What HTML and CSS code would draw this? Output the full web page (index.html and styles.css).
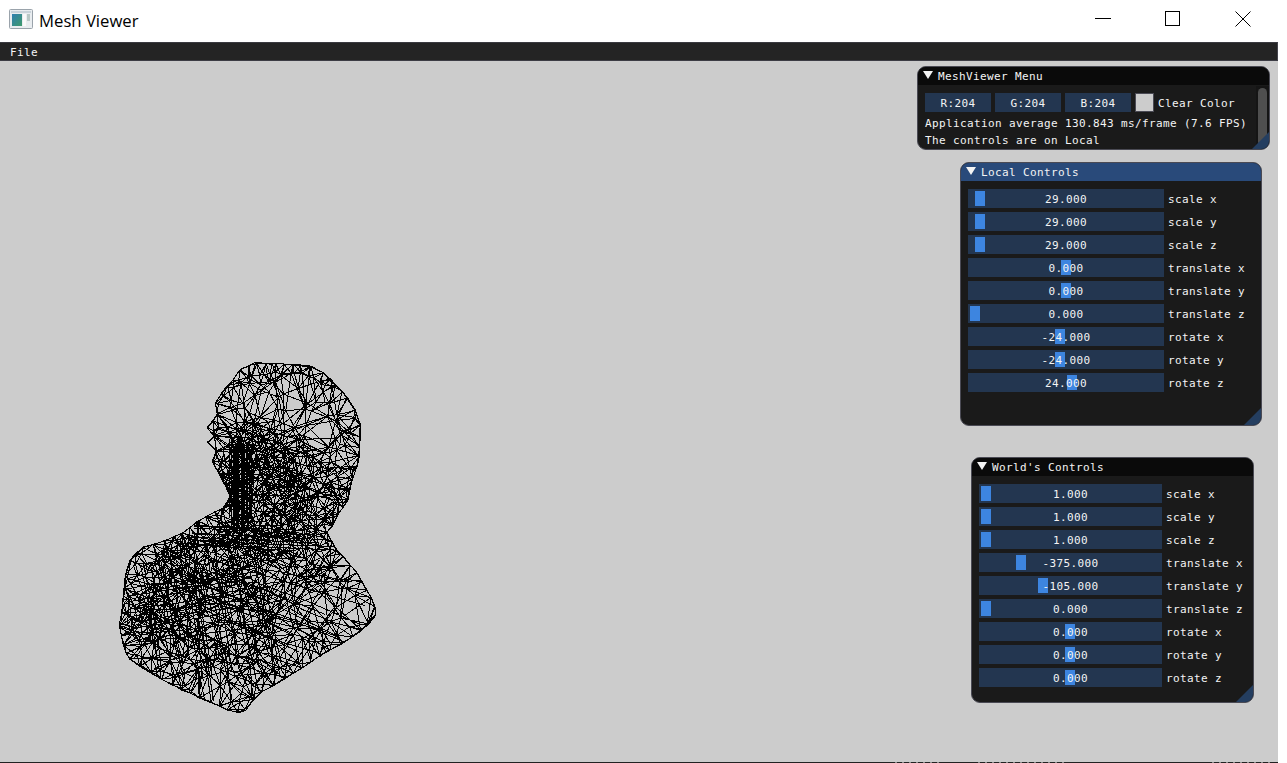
FILE: index.html
```html
<!DOCTYPE html>
<html lang="en">
<head>
<meta charset="utf-8">
<title>Mesh Viewer</title>
<link rel="stylesheet" href="styles.css">
</head>
<body>
<div class="app">
  <header class="titlebar">
    <svg class="app-icon" width="24" height="20" viewBox="0 0 24 20">
      <defs>
        <linearGradient id="pane" x1="0" y1="0" x2="1" y2="1">
          <stop offset="0" stop-color="#2f7fb0"/>
          <stop offset="1" stop-color="#3f9a6c"/>
        </linearGradient>
      </defs>
      <rect x="0.5" y="0.5" width="23" height="19" rx="1" fill="#e9edf0" stroke="#9aa3ab"/>
      <rect x="2" y="2" width="20" height="2" fill="#c9d3da"/>
      <rect x="3" y="5" width="10" height="12" fill="url(#pane)"/>
      <rect x="14" y="5" width="3" height="12" fill="#fafafa"/>
      <rect x="18" y="5" width="3" height="7" fill="#b9c8c6"/>
    </svg>
    <span class="app-title">Mesh Viewer</span>
    <div class="win-controls">
      <button class="win-btn" aria-label="Minimize"><svg width="16" height="16" viewBox="0 0 16 16"><path d="M0 7.5H16" class="glyph"/></svg></button>
      <button class="win-btn" aria-label="Maximize"><svg width="16" height="16" viewBox="0 0 16 16"><rect x="0.5" y="0.5" width="14" height="14" class="glyph"/></svg></button>
      <button class="win-btn" aria-label="Close"><svg width="16" height="16" viewBox="0 0 16 16"><path d="M0.5 0.5L15.5 15.5M15.5 0.5L0.5 15.5" class="glyph thin"/></svg></button>
    </div>
  </header>

  <nav class="menubar"><span class="menu-item">File</span></nav>

  <main class="viewport">
    <svg id="mesh" class="mesh" width="1278" height="701" viewBox="0 61 1278 701"></svg>

    <section class="win win-menu">
      <h2 class="win-title"><i class="arrow"></i>MeshViewer Menu</h2>
      <div class="win-body win-body-menu">
        <div class="color-row">
          <span class="chan">R:204</span>
          <span class="chan">G:204</span>
          <span class="chan">B:204</span>
          <span class="swatch"></span>
          <span class="row-label">Clear Color</span>
        </div>
        <p class="line">Application average 130.843 ms/frame (7.6 FPS)</p>
        <p class="line">The controls are on Local</p>
      </div>
      <div class="scrollbar"><div class="thumb"></div></div>
      <i class="grip"></i>
    </section>

    <section class="win win-local">
      <h2 class="win-title active"><i class="arrow"></i>Local Controls</h2>
      <div class="win-body">
        <div class="row"><div class="slider"><i class="grab" style="left:7px"></i><span class="val">29.000</span></div><span class="row-label">scale x</span></div>
        <div class="row"><div class="slider"><i class="grab" style="left:7px"></i><span class="val">29.000</span></div><span class="row-label">scale y</span></div>
        <div class="row"><div class="slider"><i class="grab" style="left:7px"></i><span class="val">29.000</span></div><span class="row-label">scale z</span></div>
        <div class="row"><div class="slider"><i class="grab" style="left:93px"></i><span class="val">0.000</span></div><span class="row-label">translate x</span></div>
        <div class="row"><div class="slider"><i class="grab" style="left:93px"></i><span class="val">0.000</span></div><span class="row-label">translate y</span></div>
        <div class="row"><div class="slider"><i class="grab" style="left:2px"></i><span class="val">0.000</span></div><span class="row-label">translate z</span></div>
        <div class="row"><div class="slider"><i class="grab" style="left:87px"></i><span class="val">-24.000</span></div><span class="row-label">rotate x</span></div>
        <div class="row"><div class="slider"><i class="grab" style="left:87px"></i><span class="val">-24.000</span></div><span class="row-label">rotate y</span></div>
        <div class="row"><div class="slider"><i class="grab" style="left:99px"></i><span class="val">24.000</span></div><span class="row-label">rotate z</span></div>
      </div>
      <i class="grip"></i>
    </section>

    <section class="win win-world">
      <h2 class="win-title"><i class="arrow"></i>World's Controls</h2>
      <div class="win-body">
        <div class="row"><div class="slider"><i class="grab" style="left:2px"></i><span class="val">1.000</span></div><span class="row-label">scale x</span></div>
        <div class="row"><div class="slider"><i class="grab" style="left:2px"></i><span class="val">1.000</span></div><span class="row-label">scale y</span></div>
        <div class="row"><div class="slider"><i class="grab" style="left:2px"></i><span class="val">1.000</span></div><span class="row-label">scale z</span></div>
        <div class="row"><div class="slider"><i class="grab" style="left:37px"></i><span class="val">-375.000</span></div><span class="row-label">translate x</span></div>
        <div class="row"><div class="slider"><i class="grab" style="left:59px"></i><span class="val">-105.000</span></div><span class="row-label">translate y</span></div>
        <div class="row"><div class="slider"><i class="grab" style="left:2px"></i><span class="val">0.000</span></div><span class="row-label">translate z</span></div>
        <div class="row"><div class="slider"><i class="grab" style="left:86px"></i><span class="val">0.000</span></div><span class="row-label">rotate x</span></div>
        <div class="row"><div class="slider"><i class="grab" style="left:86px"></i><span class="val">0.000</span></div><span class="row-label">rotate y</span></div>
        <div class="row"><div class="slider"><i class="grab" style="left:86px"></i><span class="val">0.000</span></div><span class="row-label">rotate z</span></div>
      </div>
      <i class="grip"></i>
    </section>
  </main>

  <footer class="strip">
    <i class="ticks ticks-a"></i>
    <i class="ticks ticks-b"></i>
    <i class="ticks ticks-c"></i>
  </footer>
</div>
<script src="mesh.js"></script>
</body>
</html>
```
FILE: styles.css
```css
* { box-sizing: border-box; }
html, body { margin: 0; height: 100%; background: #fff; overflow: hidden; }
.app { width: 1278px; height: 763px; display: flex; flex-direction: column; }

/* OS title bar */
.titlebar { height: 42px; flex: none; display: flex; align-items: center; background: #fff; padding-left: 9px; }
.app-icon { flex: none; margin: -4px 6px 0 0; }
.app-title { font: 16.7px/1 "Open Sans", "Noto Sans", sans-serif; color: #000; margin-top: 1px; }
.win-controls { margin-left: auto; display: flex; }
.win-btn { width: 70px; height: 42px; padding: 0 0 4px; border: 0; background: none; display: flex; align-items: center; justify-content: center; }
.win-btn svg { display: block; }
.glyph { fill: none; stroke: #000; stroke-width: 1; }
.glyph.thin { stroke-width: 1; }

/* menu bar */
.menubar { height: 19px; flex: none; background: #242424; border-top: 1px solid #3a3a40; border-bottom: 1px solid #3c3c44; border-right: 1px solid #45454d; padding: 2px 0 0 10px; display: flex; align-items: center; }
.menu-item, .win-title, .row-label, .val, .chan, .line { font-family: "DejaVu Sans Mono", "Liberation Mono", monospace; font-size: 11px; letter-spacing: 0.38px; line-height: 13px; color: #f4f4f4; white-space: pre; }

/* viewport */
.viewport { position: relative; flex: 1; background: #ccc; }
.mesh { position: absolute; left: 0; top: 0; }
.mesh path { fill: none; stroke: #000; stroke-width: 1; shape-rendering: crispEdges; }

/* floating tool windows */
.win { position: absolute; background: #1a1a1a; border: 1px solid #4a4a54; border-radius: 9px; overflow: hidden; }
.win-menu { left: 917px; top: 5px; width: 353px; height: 84px; }
.win-local { left: 960px; top: 101px; width: 302px; height: 264px; }
.win-world { left: 971px; top: 396px; width: 283px; height: 246px; }

.win-title { margin: 0; height: 18px; font-weight: normal; background: #0a0a0a; display: flex; align-items: center; padding: 1px 0 0 20px; position: relative; }
.win-title.active { background: #294a7a; }
.arrow { position: absolute; left: 5px; top: 4px; width: 10px; height: 8px; background: #f4f4f4; clip-path: polygon(0 0, 100% 0, 50% 100%); }

.win-body { padding: 8px 7px; display: flex; flex-direction: column; gap: 4px; }
.win-body-menu { padding-right: 0; }
.row { display: flex; align-items: center; gap: 4px; height: 19px; }
.row-label { padding-top: 2px; }
.slider { position: relative; flex: none; height: 19px; background: #233650; display: flex; align-items: center; justify-content: center; }
.win-local .slider { width: 196px; }
.win-world .slider { width: 183px; }
.grab { position: absolute; top: 2px; width: 10px; height: 15px; background: #3d85e0; }
.val { position: relative; padding-top: 2px; }

.color-row { display: flex; align-items: center; gap: 4px; height: 19px; }
.chan { width: 66px; height: 19px; background: #233650; display: flex; align-items: center; justify-content: center; padding-top: 2px; }
.swatch { width: 19px; height: 19px; background: #ccc; border: 1px solid #4a4a54; }
.line { margin: 0; height: 13px; padding-top: 1px; }

.scrollbar { position: absolute; right: 0; top: 19px; width: 13px; bottom: 0; background: #151515; padding: 2px; }
.thumb { height: 58px; border-radius: 5px; background: #4f4f4f; }
.grip { position: absolute; right: 0; bottom: 0; width: 17px; height: 17px; background: #243e60; clip-path: polygon(100% 0, 100% 100%, 0 100%); }

/* sliver of the desktop taskbar at the very bottom */
.strip { height: 1px; flex: none; background: #222; display: flex; }
.ticks { display: block; height: 1px; background: repeating-linear-gradient(90deg, #8a8a8a 0 2px, #222 2px 7px); }
.ticks-a { width: 44px; margin-left: 895px; }
.ticks-b { width: 88px; margin-left: 39px; }
.ticks-c { width: 58px; margin-left: 146px; }
```
FILE: mesh.js
```js
// Procedural wireframe of a bust: two overlaid Delaunay shells (front and back)
// clipped to the silhouette, plus long strokes for the draped chest.
(function () {
  var outline = [[257,363],[275,364],[293,364],[310,367],[323,373],[336,385],[347,398],[355,410],[360,425],[360,447],[357,465],[353,480],[347,500],[338,515],[332,525],[327,532],[337,550],[357,572],[366,590],[375,606],[375,615],[368,624],[353,637],[330,650],[310,662],[285,678],[262,692],[253,700],[246,710],[238,713],[228,710],[210,702],[190,693],[173,685],[150,673],[130,660],[123,645],[120,625],[123,600],[125,575],[130,560],[143,547],[165,541],[183,533],[197,522],[223,508],[230,497],[226,485],[219,472],[213,462],[216,452],[208,443],[214,436],[208,428],[217,414],[216,404],[222,393],[233,380],[240,370]];

  // x, y, radius, extra density
  var blobs = [[238,485,14,1],[244,452,13,.9],[268,465,20,.8],[300,490,22,.45],[240,528,22,.9],[290,535,26,.4],[180,565,18,.7],[140,615,13,.5],[165,640,22,.25],[200,600,25,.15],[230,650,25,.15]];
  var ridges = [
    [[232,382],[262,374],[295,372],[325,382]],
    [[245,408],[262,428],[300,440],[325,470],[340,505]],
    [[236,450],[262,452],[290,462],[310,490]],
    [[150,565],[200,545],[260,540],[320,530]],
    [[150,640],[152,600],[175,570]],
    [[195,570],[250,590],[265,620],[245,680],[238,706]]
  ];

  function rng(seed) { return function () { seed = (seed * 1664525 + 1013904223) >>> 0; return seed / 4294967296; }; }
  function inside(p, poly) {
    var c = false;
    for (var i = 0, j = poly.length - 1; i < poly.length; j = i++) {
      var a = poly[i], b = poly[j];
      if ((a[1] > p[1]) !== (b[1] > p[1]) && p[0] < (b[0] - a[0]) * (p[1] - a[1]) / (b[1] - a[1]) + a[0]) c = !c;
    }
    return c;
  }
  function density(x, y) {
    var d = 0.085;
    blobs.forEach(function (b) {
      var dx = x - b[0], dy = y - b[1];
      d += b[3] * Math.exp(-(dx * dx + dy * dy) / (2 * b[2] * b[2]));
    });
    return Math.min(d, 1);
  }
  function delaunay(pts) {
    var n = pts.length;
    var all = pts.concat([[-4000, -4000], [6000, -4000], [1000, 7000]]);
    function mk(a, b, c) {
      var A = all[a], B = all[b], C = all[c];
      var d = 2 * (A[0] * (B[1] - C[1]) + B[0] * (C[1] - A[1]) + C[0] * (A[1] - B[1])) || 1e-9;
      var a2 = A[0] * A[0] + A[1] * A[1], b2 = B[0] * B[0] + B[1] * B[1], c2 = C[0] * C[0] + C[1] * C[1];
      var ux = (a2 * (B[1] - C[1]) + b2 * (C[1] - A[1]) + c2 * (A[1] - B[1])) / d;
      var uy = (a2 * (C[0] - B[0]) + b2 * (A[0] - C[0]) + c2 * (B[0] - A[0])) / d;
      return { a: a, b: b, c: c, x: ux, y: uy, r: (A[0] - ux) * (A[0] - ux) + (A[1] - uy) * (A[1] - uy) };
    }
    var tris = [mk(n, n + 1, n + 2)];
    for (var i = 0; i < n; i++) {
      var p = all[i], keep = [], edges = {};
      for (var t = 0; t < tris.length; t++) {
        var T = tris[t], dx = p[0] - T.x, dy = p[1] - T.y;
        if (dx * dx + dy * dy < T.r) {
          [[T.a, T.b], [T.b, T.c], [T.c, T.a]].forEach(function (e) {
            var k = Math.min(e[0], e[1]) + '_' + Math.max(e[0], e[1]);
            edges[k] = edges[k] ? null : e;
          });
        } else keep.push(T);
      }
      for (var k in edges) if (edges[k]) keep.push(mk(edges[k][0], edges[k][1], i));
      tris = keep;
    }
    return { all: all, n: n, tris: tris };
  }
  function seg(P, Q) { return 'M' + P[0].toFixed(1) + ' ' + P[1].toFixed(1) + 'L' + Q[0].toFixed(1) + ' ' + Q[1].toFixed(1); }
  function shell(seed, candidates, withRidges) {
    var r = rng(seed), pts = [];
    outline.forEach(function (a, i) {
      var b = outline[(i + 1) % outline.length];
      var len = Math.hypot(b[0] - a[0], b[1] - a[1]), steps = Math.max(1, Math.round(len / 11));
      for (var s = 0; s < steps; s++) pts.push([a[0] + (b[0] - a[0]) * s / steps + (r() - .5) * 2, a[1] + (b[1] - a[1]) * s / steps + (r() - .5) * 2]);
    });
    for (var c = 0; c < candidates; c++) {
      var x = 118 + r() * 260, y = 362 + r() * 352;
      if (inside([x, y], outline) && r() < density(x, y)) pts.push([x, y]);
    }
    if (withRidges) ridges.forEach(function (rd) {
      for (var i = 0; i < rd.length - 1; i++) {
        var a = rd[i], b = rd[i + 1], l = Math.hypot(b[0] - a[0], b[1] - a[1]);
        for (var s = 0; s < l; s += 7) {
          var f = s / l;
          pts.push([a[0] + (b[0] - a[0]) * f + (r() - .5) * 3, a[1] + (b[1] - a[1]) * f + (r() - .5) * 3]);
        }
      }
    });
    var m = delaunay(pts), seen = {}, d = '';
    m.tris.forEach(function (t) {
      if (t.a >= m.n || t.b >= m.n || t.c >= m.n) return;
      var A = m.all[t.a], B = m.all[t.b], C = m.all[t.c];
      if (!inside([(A[0] + B[0] + C[0]) / 3, (A[1] + B[1] + C[1]) / 3], outline)) return;
      [[t.a, t.b], [t.b, t.c], [t.c, t.a]].forEach(function (e) {
        var k = Math.min(e[0], e[1]) + '_' + Math.max(e[0], e[1]);
        if (seen[k]) return;
        seen[k] = 1;
        d += seg(m.all[e[0]], m.all[e[1]]);
      });
    });
    return d;
  }
  // Long near-parallel strokes: the quad strips across the chest and shoulder.
  function strokes(seed, x0, y0, x1, y1, dx, dy, count) {
    var r = rng(seed), d = '';
    for (var i = 0; i < count; i++) {
      var f = i / count;
      var P = [x0 + (x1 - x0) * f + (r() - .5) * 4, y0 + (y1 - y0) * f + (r() - .5) * 4];
      var steps = 3 + Math.floor(r() * 4);
      for (var s = 0; s < steps; s++) {
        var Q = [P[0] + dx * (.7 + r() * .6) / steps, P[1] + dy * (.7 + r() * .6) / steps];
        if (inside(P, outline) && inside(Q, outline)) d += seg(P, Q);
        P = Q;
      }
    }
    return d;
  }
  var d = shell(12345, 4000, true) + shell(98765, 3000, false)
    + strokes(7, 135, 565, 265, 555, 28, 140, 26)
    + strokes(11, 128, 590, 135, 650, 130, -18, 9)
    + strokes(23, 215, 555, 195, 610, 165, 70, 12)
    + strokes(31, 300, 540, 350, 590, -70, 110, 8)
    + strokes(41, 230, 445, 250, 445, 0, 75, 22)
    + strokes(47, 195, 525, 190, 548, 130, 6, 9);
  var path = document.createElementNS('http://www.w3.org/2000/svg', 'path');
  path.setAttribute('d', d);
  document.getElementById('mesh').appendChild(path);
})();
```
